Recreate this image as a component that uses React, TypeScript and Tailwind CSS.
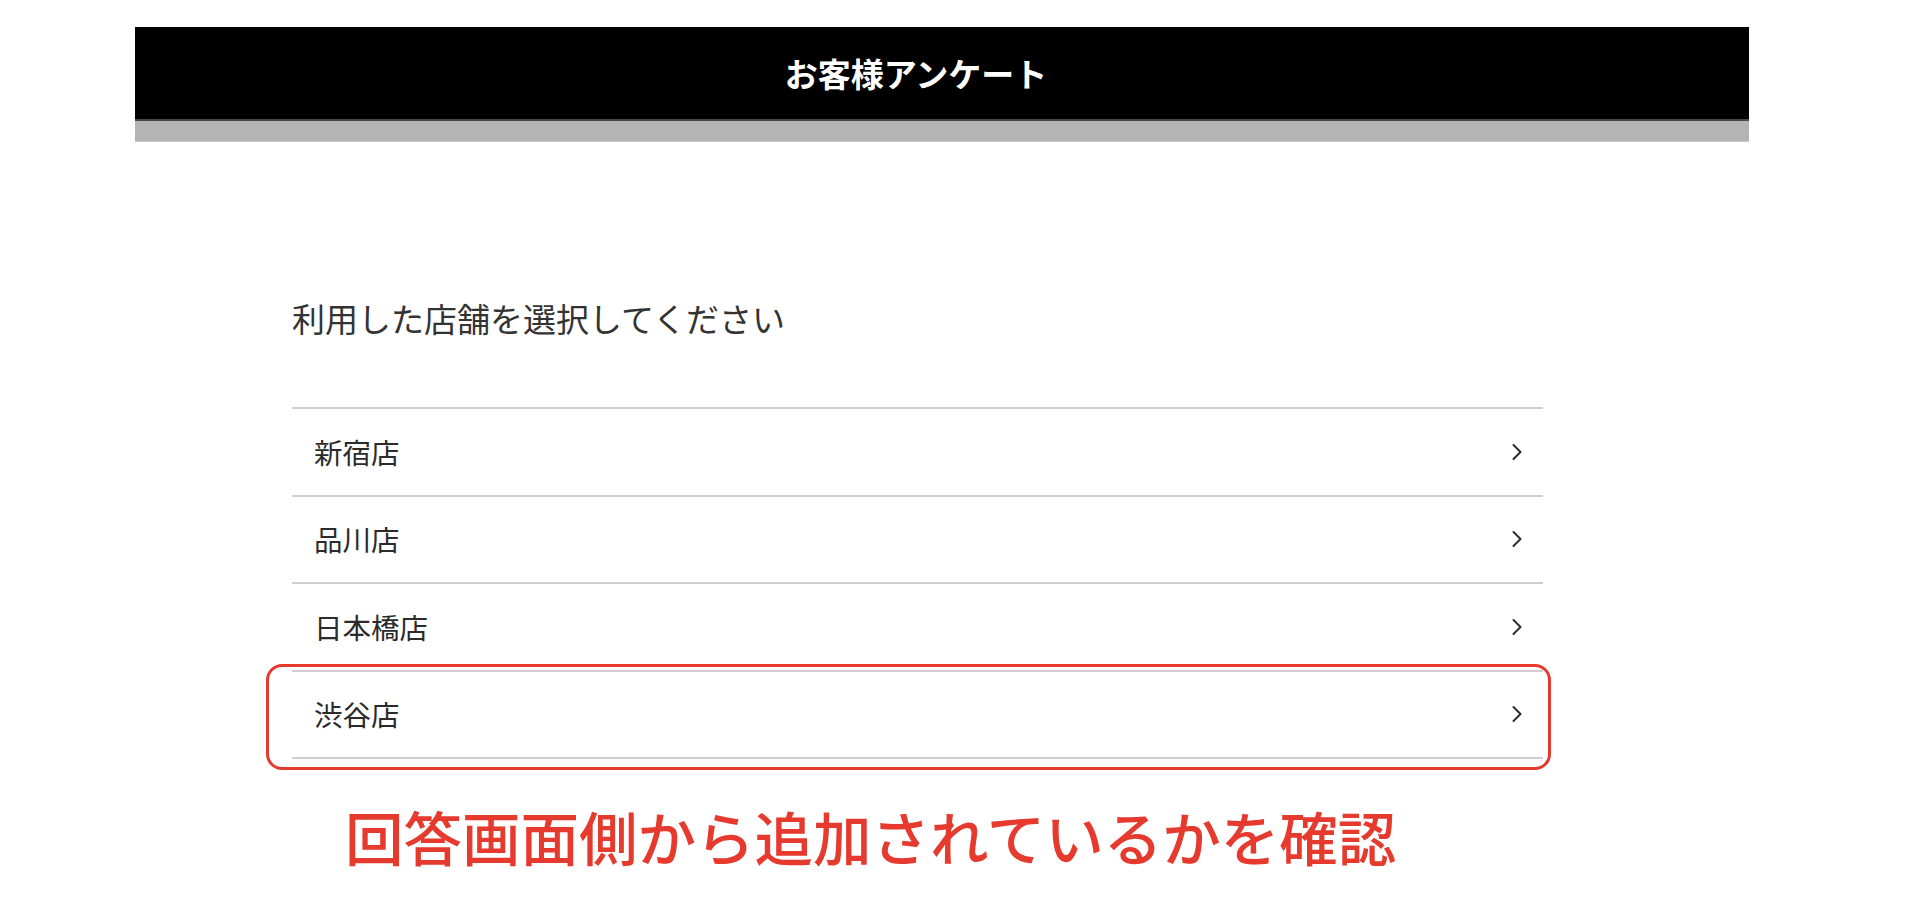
import React from 'react';

const shops = ['新宿店', '品川店', '日本橋店', '渋谷店'];

const Chevron = () => (
  <svg width="12" height="18" viewBox="0 0 12 18" fill="none">
    <polyline points="2.5,2 9.5,9 2.5,16" stroke="#2b2b2b" strokeWidth="2" strokeLinecap="round" strokeLinejoin="round" />
  </svg>
);

const App = () => {
  return (
    <div className="min-h-[902px] bg-white pt-[27px] font-['Noto_Sans_CJK_JP','Noto_Sans',sans-serif]">
      {/* header */}
      <div className="ml-[135px] w-[1614px]">
        <div className="flex h-[92px] items-center justify-center bg-black pr-[52px]">
          <h1 className="text-[33px] font-bold leading-none text-white">お客様アンケート</h1>
        </div>
        <div className="h-[2px] bg-[#4a4a4a]" />
        <div className="h-[21px] border-b border-[#c8c8c8] bg-[#b4b4b4]" />
      </div>

      <div className="ml-[292px] w-[1251px]">
        <p className="mt-[152px] text-[33px] leading-[48px] text-[#333]">利用した店舗を選択してください</p>

        <ul className="mt-[65px] border-b-2 border-[#cfcfcf]">
          {shops.map((shop, i) => (
            <li
              key={shop}
              className="relative flex h-[87.5px] items-center justify-between border-t-2 border-[#cfcfcf] pl-[22px] pr-[20px]"
            >
              <span className="text-[28.5px] leading-none text-[#2b2b2b]">{shop}</span>
              <Chevron />
              {i === shops.length - 1 && (
                <div className="pointer-events-none absolute -top-[8px] -right-[8px] -bottom-[13px] -left-[26px] rounded-[16px] border-[3px] border-[#e63a2e]" />
              )}
            </li>
          ))}
        </ul>

        <p className="mt-[42px] ml-[53px] text-[58.5px] font-medium leading-[70px] text-[#e63a2e]">
          回答画面側から追加されているかを確認
        </p>
      </div>
    </div>
  );
};

export default App;
